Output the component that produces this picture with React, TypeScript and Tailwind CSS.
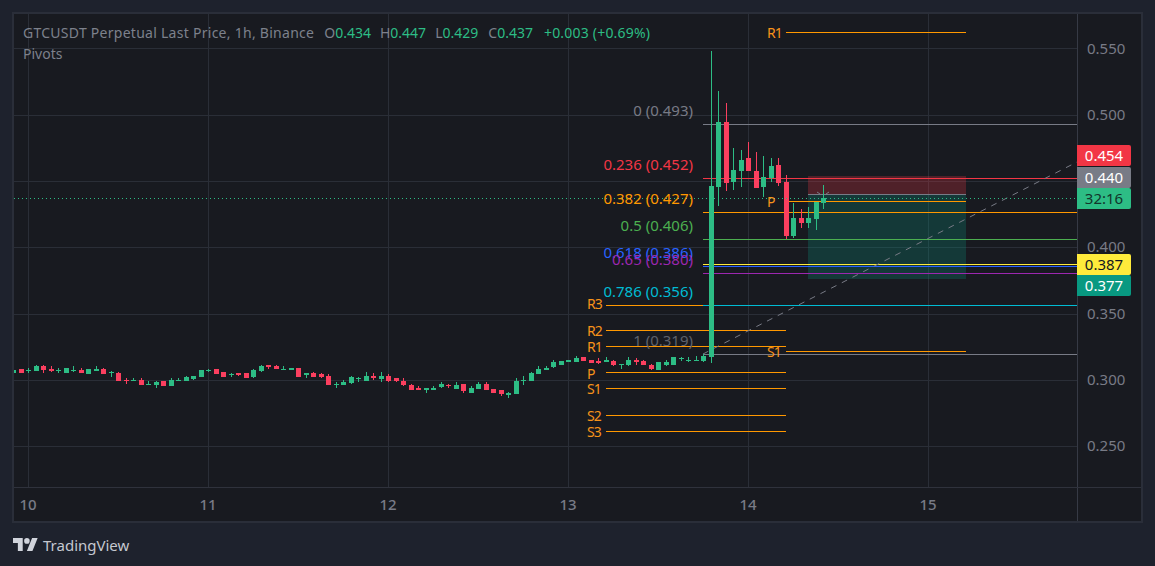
type Candle = [string, number, number, number, number];

const G = "#2dbd85";
const R = "#fb3f5f";

// [colour, body top, body bottom, wick top, wick bottom] read off in 3x crop pixels
const early: Candle[] = [
	[G, 60, 68, 54, 68], [R, 57, 68, 57, 68], [G, 60, 63, 54, 68], [G, 48, 63, 46, 63],
	[R, 48, 60, 45, 68], [R, 57, 63, 48, 66], [G, 60, 63, 54, 68], [G, 54, 68, 54, 69],
	[G, 60, 62, 48, 66], [R, 60, 68, 54, 69], [G, 57, 72, 57, 72], [G, 57, 63, 48, 63],
	[R, 57, 72, 54, 72], [G, 67, 70, 63, 81], [R, 69, 93, 66, 93], [R, 90, 94, 84, 102],
	[G, 90, 92, 84, 94], [R, 90, 105, 84, 105], [G, 102, 104, 93, 105], [G, 96, 105, 93, 114],
	[R, 93, 108, 93, 108], [G, 90, 108, 84, 108], [G, 90, 92, 84, 93], [G, 81, 93, 78, 93],
	[G, 78, 87, 78, 90], [G, 60, 81, 60, 81], [G, 60, 63, 57, 66], [R, 57, 72, 57, 72],
	[R, 66, 81, 66, 81], [G, 71, 73, 69, 81], [R, 69, 75, 69, 78], [R, 69, 84, 69, 84],
	[G, 60, 81, 57, 84], [G, 48, 63, 45, 66], [R, 45, 51, 45, 57], [R, 48, 57, 45, 57],
];

const middle: Candle[] = [
	[G, 87, 89, 78, 89], [G, 84, 90, 84, 90], [R, 84, 111, 84, 111], [G, 99, 104, 99, 114],
	[R, 99, 111, 96, 111], [R, 102, 111, 99, 114], [R, 108, 135, 102, 135], [G, 132, 136, 126, 144],
	[G, 126, 135, 120, 135], [G, 111, 129, 108, 132], [G, 114, 116, 111, 126], [G, 108, 123, 96, 123],
	[R, 108, 114, 99, 120], [G, 108, 117, 96, 126], [R, 108, 123, 102, 126], [R, 114, 123, 114, 126],
	[R, 123, 135, 114, 138], [R, 135, 150, 132, 150], [R, 144, 150, 138, 150], [G, 144, 149, 144, 159],
	[G, 144, 150, 138, 150], [G, 132, 141, 126, 144], [R, 135, 138, 132, 144], [G, 135, 147, 126, 147],
	[R, 132, 153, 132, 159], [G, 144, 159, 138, 159], [G, 132, 147, 126, 147], [R, 132, 150, 126, 150],
	[R, 147, 159, 147, 159], [R, 150, 162, 150, 168], [G, 159, 164, 156, 174], [G, 123, 162, 114, 162],
	[G, 120, 122, 108, 135], [G, 99, 123, 96, 123], [G, 87, 102, 78, 102], [G, 84, 90, 78, 90],
	[G, 66, 81, 60, 84], [G, 63, 75, 63, 75], [G, 60, 65, 60, 65], [G, 54, 66, 48, 66],
	[R, 51, 63, 51, 63], [R, 60, 69, 60, 69], [R, 63, 69, 54, 72], [G, 60, 66, 51, 66],
	[R, 63, 75, 60, 78], [G, 72, 74, 72, 87], [G, 60, 75, 51, 78], [R, 60, 66, 54, 75],
	[R, 63, 75, 60, 75], [R, 75, 87, 72, 90], [G, 66, 90, 66, 90], [G, 66, 75, 60, 78],
	[G, 51, 75, 51, 75], [G, 54, 57, 51, 63], [G, 60, 63, 51, 66], [G, 60, 63, 48, 63],
	[G, 48, 63, 42, 66],
];

// the pump, in page pixels
const pump: Candle[] = [
	[G, 186, 357, 51, 363], [G, 122, 187, 91, 206], [R, 122, 183, 103, 191], [G, 170, 182, 148, 190],
	[G, 160, 171, 150, 187], [R, 158, 171, 142, 171], [R, 171, 188, 152, 188], [G, 177, 187, 156, 197],
	[G, 166, 178, 158, 182], [R, 165, 183, 158, 186], [R, 182, 236, 175, 239], [G, 218, 236, 203, 238],
	[R, 218, 223, 209, 228], [G, 218, 223, 207, 228], [G, 202, 219, 202, 230], [G, 198, 203, 185, 209],
];

const scale = (rows: Candle[], base: number): Candle[] =>
	rows.map(([c, a, b, d, e]) => [c, base + a / 3, base + b / 3, base + d / 3, base + e / 3]);

const candles = [...scale(early, 350), ...scale(middle, 340), ...pump];

const gridX = [28, 208, 388, 568, 748, 928];
const gridY = [48, 115, 181, 247, 314, 380, 446];

const fibs = [
	{ y: 124, label: "0 (0.493)", ty: 111, color: "#787b86" },
	{ y: 178, label: "0.236 (0.452)", ty: 165, color: "#f23645" },
	{ y: 212, label: "0.382 (0.427)", ty: 199, color: "#ff9800" },
	{ y: 239, label: "0.5 (0.406)", ty: 226, color: "#4caf50" },
	{ y: 266, label: "0.618 (0.386)", ty: 253, color: "#2962ff" },
	{ y: 273, label: "0.65 (0.380)", ty: 260, color: "#9c27b0" },
	{ y: 305, label: "0.786 (0.356)", ty: 292, color: "#00bcd4" },
	{ y: 354, label: "1 (0.319)", ty: 341, color: "#5f626c" },
];

const pivots = [
	{ x1: 606, x2: 786, tx: 587, y: 305, ty: 304, label: "R3" },
	{ x1: 606, x2: 786, tx: 587, y: 330, ty: 331, label: "R2" },
	{ x1: 606, x2: 786, tx: 587, y: 346, ty: 346.5, label: "R1" },
	{ x1: 606, x2: 786, tx: 587, y: 372, ty: 374, label: "P" },
	{ x1: 606, x2: 786, tx: 587, y: 388, ty: 389, label: "S1" },
	{ x1: 606, x2: 786, tx: 587, y: 415, ty: 416, label: "S2" },
	{ x1: 606, x2: 786, tx: 587, y: 431, ty: 432, label: "S3" },
	{ x1: 786, x2: 966, tx: 767, y: 32, ty: 33, label: "R1" },
	{ x1: 786, x2: 966, tx: 767, y: 201, ty: 202, label: "P" },
	{ x1: 786, x2: 966, tx: 767, y: 351, ty: 352, label: "S1" },
];

const ticks = [
	{ y: 49, label: "0.550" },
	{ y: 115, label: "0.500" },
	{ y: 247, label: "0.400" },
	{ y: 314, label: "0.350" },
	{ y: 380, label: "0.300" },
	{ y: 446, label: "0.250" },
];

const Tag = ({ className, children }: { className: string; children: string }) => (
	<div
		className={`absolute -left-px w-[54px] h-[21px] rounded-r-[2px] flex items-center justify-center text-[15px] ${className}`}
	>
		{children}
	</div>
);

const Chart = () => (
	<svg
		className="absolute inset-0 w-full h-full"
		viewBox="14 14 1063 473"
		fontSize="15"
		fontFamily="'Noto Sans', sans-serif"
	>
		<g shapeRendering="crispEdges">
			{gridX.map((x) => (
				<rect key={x} x={x} y={14} width={1} height={473} fill="#2a2e37" />
			))}
			{gridY.map((y) => (
				<rect key={y} x={14} y={y} width={1063} height={1} fill="#2a2e37" />
			))}

			{/* long / short position box */}
			<rect x={808} y={176} width={158} height={18} fill="#f23645" fillOpacity={0.25} />
			<rect x={808} y={194} width={158} height={85} fill="#089981" fillOpacity={0.25} />

			{pivots.map((p) => (
				<rect key={p.label + p.y} x={p.x1} y={p.y} width={p.x2 - p.x1} height={1} fill="#ff9800" />
			))}
			{fibs.map((f) => (
				<rect key={f.y} x={703} y={f.y} width={374} height={1} fill={f.color === "#5f626c" ? "#787b86" : f.color} />
			))}
			<rect x={703} y={264} width={374} height={1} fill="#ffeb3b" />
			<rect x={808} y={194} width={158} height={1} fill="#787b86" />
		</g>

		<line x1={703} y1={354} x2={1077} y2={162} stroke="#787b86" strokeDasharray="6 6" />
		<path d="M817 192l3 2M826 194l3-2" stroke="#787b86" fill="none" />

		<g shapeRendering="crispEdges">
			{candles.map(([color, top, bottom, high, low], i) => {
				const cx = Math.floor(13.5 + 7.5 * i);
				return (
					<g key={i} fill={color}>
						<rect x={cx} y={Math.round(high)} width={1} height={Math.round(low - high)} />
						<rect x={cx - 2} y={Math.round(top)} width={5} height={Math.max(1, Math.round(bottom - top))} />
					</g>
				);
			})}
		</g>

		<line x1={14} y1={198.5} x2={1077} y2={198.5} stroke={G} strokeDasharray="1 3" />

		{fibs.map((f) => (
			<text key={f.label} x={693} y={f.ty + 5} textAnchor="end" fill={f.color}>
				{f.label}
			</text>
		))}
		{pivots.map((p) => (
			<text key={p.label + p.y} x={p.tx} y={p.ty + 5} fontSize="14" letterSpacing="-1" fill="#f7931a">
				{p.label}
			</text>
		))}
	</svg>
);

const Legend = () => (
	<div className="absolute left-[9px] top-[8px] text-[14px] leading-[21px] text-[#7d818c] whitespace-nowrap">
		<div className="flex">
			<span className="mr-[10px] tracking-[0.27px]">GTCUSDT Perpetual Last Price, 1h, Binance</span>
			<span className="mr-[9px]">
				O<span className="text-[#2dbd85]">0.434</span>
			</span>
			<span className="mr-[9px]">
				H<span className="text-[#2dbd85]">0.447</span>
			</span>
			<span className="mr-[10px]">
				L<span className="text-[#2dbd85]">0.429</span>
			</span>
			<span className="mr-[11px]">
				C<span className="text-[#2dbd85]">0.437</span>
			</span>
			<span className="text-[#2dbd85] tracking-[0.2px]">+0.003 (+0.69%)</span>
		</div>
		<div>Pivots</div>
	</div>
);

export default function App() {
	return (
		<div className="w-screen h-screen overflow-hidden bg-[#1e222d] pl-3 pt-3 font-['Noto_Sans',sans-serif]">
			<div className="w-[1131px] h-[511px] border-2 border-[#2a2e39] bg-[#181a20] flex flex-col">
				<div className="h-[474px] flex border-b border-[#2f323c]">
					<div className="relative w-[1063px] overflow-hidden">
						<Chart />
						<Legend />
					</div>
					<div className="relative flex-1 border-l border-[#363a45] text-[#787b86] text-[15px]">
						{ticks.map((t) => (
							<span key={t.y} className="absolute left-[9px] leading-[20px]" style={{ top: t.y - 25 }}>
								{t.label}
							</span>
						))}
						<Tag className="top-[131px] bg-[#f23645] text-white">0.454</Tag>
						<Tag className="top-[153px] bg-[#787b86] text-white">0.440</Tag>
						<Tag className="top-[174px] bg-[#2dbd85] text-[#12352b]">32:16</Tag>
						<Tag className="top-[240px] bg-[#ffeb3b] text-[#131722]">0.387</Tag>
						<Tag className="top-[261px] bg-[#089981] text-white">0.377</Tag>
					</div>
				</div>
				<div className="flex-1 flex text-[#787b86] text-[15px] font-medium">
					<div className="w-[1063px] overflow-hidden">
						<div className="flex -ml-[76px] h-full items-center">
							{[10, 11, 12, 13, 14, 15].map((d) => (
								<span key={d} className="w-[180px] shrink-0 text-center">
									{d}
								</span>
							))}
						</div>
					</div>
					<div className="flex-1 border-l border-[#363a45]" />
				</div>
			</div>
			<div className="flex items-center gap-[5px] mt-[12px] ml-px">
				<svg className="mb-[2px]" width="25" height="13" viewBox="0 4 36 18" preserveAspectRatio="none" fill="#d1d4dc">
					<path d="M14 22H7V11H0V4h14v18zM28 22h-8l7.5-18h8L28 22z" />
					<circle cx="20" cy="8" r="4" />
				</svg>
				<span className="text-[15px] text-[#c5c8d0] leading-[20px]">TradingView</span>
			</div>
		</div>
	);
}
